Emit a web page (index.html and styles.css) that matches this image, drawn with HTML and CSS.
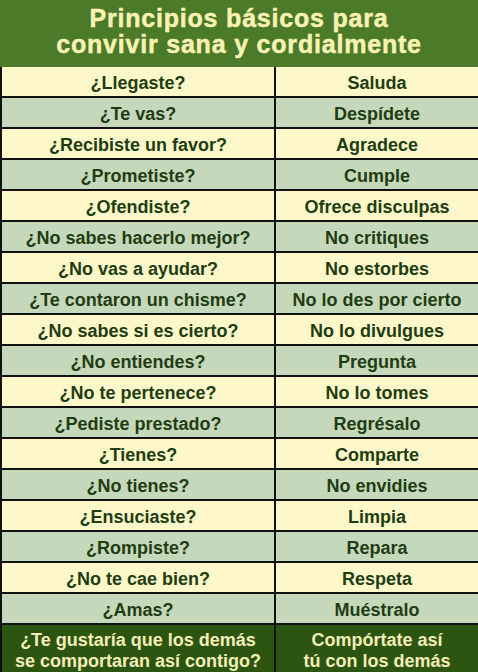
FILE: index.html
```html
<!DOCTYPE html>
<html lang="es">
<head>
<meta charset="utf-8">
<link rel="stylesheet" href="styles.css">
</head>
<body>
<div class="page">
  <header class="head">
    <h1>Principios básicos para<br>convivir sana y cordialmente</h1>
  </header>
  <div class="table">
    <div class="row y"><div class="c l">¿Llegaste?</div><div class="c r">Saluda</div></div>
    <div class="row g"><div class="c l">¿Te vas?</div><div class="c r">Despídete</div></div>
    <div class="row y"><div class="c l">¿Recibiste un favor?</div><div class="c r">Agradece</div></div>
    <div class="row g"><div class="c l">¿Prometiste?</div><div class="c r">Cumple</div></div>
    <div class="row y"><div class="c l">¿Ofendiste?</div><div class="c r">Ofrece disculpas</div></div>
    <div class="row g"><div class="c l">¿No sabes hacerlo mejor?</div><div class="c r">No critiques</div></div>
    <div class="row y"><div class="c l">¿No vas a ayudar?</div><div class="c r">No estorbes</div></div>
    <div class="row g"><div class="c l">¿Te contaron un chisme?</div><div class="c r">No lo des por cierto</div></div>
    <div class="row y"><div class="c l">¿No sabes si es cierto?</div><div class="c r">No lo divulgues</div></div>
    <div class="row g"><div class="c l">¿No entiendes?</div><div class="c r">Pregunta</div></div>
    <div class="row y"><div class="c l">¿No te pertenece?</div><div class="c r">No lo tomes</div></div>
    <div class="row g"><div class="c l">¿Pediste prestado?</div><div class="c r">Regrésalo</div></div>
    <div class="row y"><div class="c l">¿Tienes?</div><div class="c r">Comparte</div></div>
    <div class="row g"><div class="c l">¿No tienes?</div><div class="c r">No envidies</div></div>
    <div class="row y"><div class="c l">¿Ensuciaste?</div><div class="c r">Limpia</div></div>
    <div class="row g"><div class="c l">¿Rompiste?</div><div class="c r">Repara</div></div>
    <div class="row y"><div class="c l">¿No te cae bien?</div><div class="c r">Respeta</div></div>
    <div class="row g"><div class="c l">¿Amas?</div><div class="c r">Muéstralo</div></div>
    <div class="row d"><div class="c l">¿Te gustaría que los demás<br>se comportaran así contigo?</div><div class="c r">Compórtate así<br>tú con los demás</div></div>
  </div>
</div>
</body>
</html>
```
FILE: styles.css
```css
html, body {
  margin: 0;
  padding: 0;
}
body {
  width: 478px;
  height: 672px;
  overflow: hidden;
  font-family: "Liberation Sans", Arial, sans-serif;
  font-weight: bold;
}
.head {
  background: #4b7a28;
  height: 67px;
  display: flex;
  align-items: center;
  justify-content: center;
}
.head h1 {
  margin: 0;
  color: #f8f2b4;
  font-size: 25px;
  line-height: 26px;
  text-align: center;
  font-weight: bold;
  letter-spacing: 0.8px;
  -webkit-text-stroke: 0.5px #f8f2b4;
  padding-bottom: 6px;
}
.table {
  border-left: 2px solid #111;
}
.row {
  display: grid;
  grid-template-columns: 274px 1fr;
  height: 31px;
  box-sizing: border-box;
  border-bottom: 2px solid #111;
}
.c {
  display: flex;
  align-items: center;
  justify-content: center;
  text-align: center;
  font-size: 18px;
  color: #1f3d12;
  padding-top: 3px;
  white-space: nowrap;
}
.l {
  border-right: 2px solid #111;
}
.row.y { background: #fdf7c9; }
.row.g { background: #c6d8bb; }
.row.d {
  background: #2d5512;
  height: 50px;
  border-bottom: none;
}
.row.d .c {
  color: #f4eeb6;
  line-height: 21px;
  align-items: flex-start;
  padding-top: 5px;
}
```
